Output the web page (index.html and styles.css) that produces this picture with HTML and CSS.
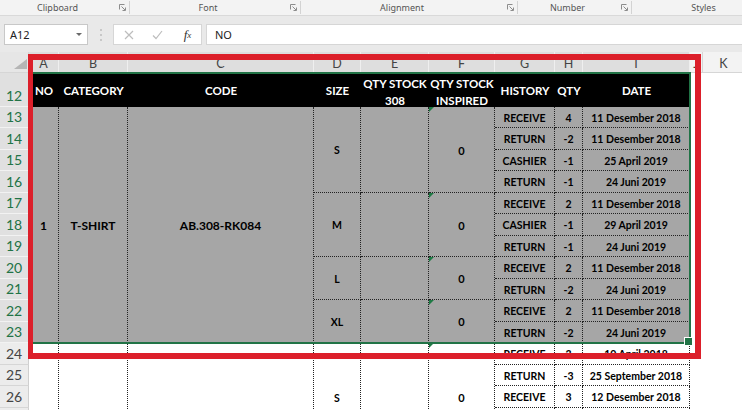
FILE: index.html
```html
<!DOCTYPE html>
<html>
<head>
<meta charset="utf-8">
<link rel="stylesheet" href="styles.css">
</head>
<body>
<div class="ribbon">
  <div class="grp g1"><span class="lbl">Clipboard</span><svg class="launch" viewBox="0 0 7 7"><path d="M.5 5.5V.5h5" /><path d="M2.5 2.5l3.6 3.6M6.5 3.5v3h-3" /></svg></div>
  <div class="grp g2"><span class="lbl">Font</span><svg class="launch" viewBox="0 0 7 7"><path d="M.5 5.5V.5h5" /><path d="M2.5 2.5l3.6 3.6M6.5 3.5v3h-3" /></svg></div>
  <div class="grp g3"><span class="lbl">Alignment</span><svg class="launch" viewBox="0 0 7 7"><path d="M.5 5.5V.5h5" /><path d="M2.5 2.5l3.6 3.6M6.5 3.5v3h-3" /></svg></div>
  <div class="grp g4"><span class="lbl">Number</span><svg class="launch" viewBox="0 0 7 7"><path d="M.5 5.5V.5h5" /><path d="M2.5 2.5l3.6 3.6M6.5 3.5v3h-3" /></svg></div>
  <div class="grp g5"><span class="lbl">Styles</span></div>
</div>

<div class="fbar">
  <div class="namebox"><span>A12</span><span class="caret"></span></div>
  <div class="grip"><svg viewBox="0 0 4 14" width="4" height="14"><circle cx="2" cy="2" r="1"/><circle cx="2" cy="7" r="1"/><circle cx="2" cy="12" r="1"/></svg></div>
  <div class="fxbox">
    <span class="fbtn"><svg viewBox="0 0 10 10" width="10" height="10"><path d="M1 1l8 8M9 1l-8 8"/></svg></span>
    <span class="fbtn"><svg viewBox="0 0 11 10" width="11" height="10"><path d="M1 5.5l3 3 6-7.5"/></svg></span>
    <span class="fbtn fx"><i>f</i><sub>x</sub></span>
  </div>
  <div class="finput">NO</div>
</div>

<div class="sheet">
  <div class="ch corner"><span class="ctri"></span></div>
  <div class="ch s">A</div><div class="ch s">B</div><div class="ch s">C</div><div class="ch s">D</div><div class="ch s">E</div><div class="ch s">F</div><div class="ch s">G</div><div class="ch s">H</div><div class="ch s">I</div><div class="ch">J</div><div class="ch">K</div>

  <div class="rh s">12</div>
  <div class="h">NO</div><div class="h">CATEGORY</div><div class="h">CODE</div><div class="h">SIZE</div><div class="h two">QTY STOCK<br>308</div><div class="h two">QTY STOCK<br>INSPIRED</div><div class="h">HISTORY</div><div class="h">QTY</div><div class="h">DATE</div>

  <div class="rh s">13</div>
  <div class="c g big r11">1</div>
  <div class="c g big r11">T-SHIRT</div>
  <div class="c g big r11">AB.308-RK084</div>
  <div class="c g r4">S</div><div class="c g r4"></div><div class="c g r4 num err">0</div>
  <div class="c g">RECEIVE</div><div class="c g">4</div><div class="c g">11 Desember 2018</div>

  <div class="rh s">14</div>
  <div class="c g">RETURN</div><div class="c g">-2</div><div class="c g">11 Desember 2018</div>

  <div class="rh s">15</div>
  <div class="c g">CASHIER</div><div class="c g">-1</div><div class="c g">25 April 2019</div>

  <div class="rh s">16</div>
  <div class="c g">RETURN</div><div class="c g">-1</div><div class="c g">24 Juni 2019</div>

  <div class="rh s">17</div>
  <div class="c g r3">M</div><div class="c g r3"></div><div class="c g r3 num err">0</div>
  <div class="c g">RECEIVE</div><div class="c g">2</div><div class="c g">11 Desember 2018</div>

  <div class="rh s">18</div>
  <div class="c g">CASHIER</div><div class="c g">-1</div><div class="c g">29 April 2019</div>

  <div class="rh s">19</div>
  <div class="c g">RETURN</div><div class="c g">-1</div><div class="c g">24 Juni 2019</div>

  <div class="rh s">20</div>
  <div class="c g r2">L</div><div class="c g r2"></div><div class="c g r2 num err">0</div>
  <div class="c g">RECEIVE</div><div class="c g">2</div><div class="c g">11 Desember 2018</div>

  <div class="rh s">21</div>
  <div class="c g">RETURN</div><div class="c g">-2</div><div class="c g">24 Juni 2019</div>

  <div class="rh s">22</div>
  <div class="c g r2">XL</div><div class="c g r2"></div><div class="c g r2 num err">0</div>
  <div class="c g">RECEIVE</div><div class="c g">2</div><div class="c g">11 Desember 2018</div>

  <div class="rh s">23</div>
  <div class="c g">RETURN</div><div class="c g">-2</div><div class="c g">24 Juni 2019</div>

  <div class="rh">24</div>
  <div class="c nb r5"></div><div class="c nb r5"></div><div class="c nb r5"></div>
  <div class="c nb r5">S</div><div class="c nb r5"></div><div class="c nb r5 num err">0</div>
  <div class="c">RECEIVE</div><div class="c">3</div><div class="c">10 April 2018</div>

  <div class="rh">25</div>
  <div class="c">RETURN</div><div class="c">-3</div><div class="c">25 September 2018</div>

  <div class="rh">26</div>
  <div class="c">RECEIVE</div><div class="c">3</div><div class="c">12 Desember 2018</div>

  <div class="rh"></div>
  <div class="c"></div><div class="c"></div><div class="c"></div>

  <div class="rh"></div>
  <div class="c"></div><div class="c"></div><div class="c"></div>

  <div class="sel"></div>
  <div class="mark"></div>
</div>
</body>
</html>
```

FILE: styles.css
```css
* { box-sizing: border-box; margin: 0; padding: 0; }
html, body { width: 742px; height: 410px; overflow: hidden; background: #fff; }
body { font-family: Lato, "Noto Sans", sans-serif; color: #000; }

/* ribbon group labels */
.ribbon {
  display: flex;
  height: 16px;
  background: #f3f3f3;
  border-bottom: 1px solid #d9d9d9;
  font-family: "Noto Sans", sans-serif;
  font-size: 9px;
  color: #555;
  overflow: hidden;
}
.grp {
  flex-shrink: 0;
  display: flex;
  align-items: center;
  height: 13px;
  margin-top: 1px;
  padding-right: 3px;
  border-right: 1px solid #d3d3d3;
}
.g1 { width: 130px; }
.g2 { width: 171px; }
.g3 { width: 217px; }
.g4 { width: 114px; }
.g5 { width: 146px; border-right: none; }
.lbl { flex: 1; text-align: center; line-height: 13px; }
.launch {
  width: 7px;
  height: 7px;
  margin-left: 4px;
  fill: none;
  stroke: #8c8c8c;
  stroke-width: 1;
}

/* formula bar */
.fbar {
  display: flex;
  height: 36px;
  padding: 8px 0 0 4px;
  background: #e9e9e9;
  font-family: "Noto Sans", sans-serif;
  font-size: 11px;
  color: #222;
}
.namebox {
  width: 84px;
  height: 21px;
  background: #fff;
  border: 1px solid #c8c8c8;
  display: flex;
  align-items: center;
  justify-content: space-between;
  padding: 0 5px;
}
.caret {
  width: 0;
  height: 0;
  border-left: 3px solid transparent;
  border-right: 3px solid transparent;
  border-top: 3px solid #6a6a6a;
}
.grip {
  width: 25px;
  height: 21px;
  display: flex;
  align-items: center;
  justify-content: center;
}
.grip svg { fill: #bcbcbc; }
.fxbox {
  width: 89px;
  height: 21px;
  background: #fff;
  border: 1px solid #d6d6d6;
  display: flex;
  align-items: center;
}
.fbtn {
  width: 29px;
  display: flex;
  align-items: center;
  justify-content: center;
}
.fbtn svg { fill: none; stroke: #bdbdbd; stroke-width: 1.2; }
.fx {
  font-family: "Liberation Serif", serif;
  font-size: 13px;
  color: #333;
  padding-left: 2px;
}
.fx sub { font-size: 9px; font-style: italic; vertical-align: -1px; }
.finput {
  flex: 1;
  margin-left: 4px;
  height: 21px;
  background: #fff;
  border: 1px solid #d6d6d6;
  border-right: none;
  padding-left: 8px;
  display: flex;
  align-items: center;
}

/* sheet */
.sheet {
  position: relative;
  display: grid;
  grid-template-columns: 29px 30px 69px 186px 47px 68px 66px 60px 28px 107px 13px 42px;
  grid-template-rows: 21px 34px repeat(8, 21px 22px);
}
.ch {
  display: flex;
  align-items: center;
  justify-content: center;
  padding-top: 3px;
  background: #f3f3f3;
  border-right: 1px solid #d6d6d6;
  border-bottom: 1px solid #d6d6d6;
  font-size: 12.5px;
  color: #444;
}
.ch.s { background: #dedede; border-right-color: #efefef; }
.corner {
  background: #e6e6e6;
  align-items: flex-end;
  justify-content: flex-end;
  padding: 0 1px 3px 0;
}
.ctri {
  width: 0;
  height: 0;
  border-left: 13px solid transparent;
  border-bottom: 10px solid #b5b5b5;
}
.rh {
  grid-column: 1;
  display: flex;
  align-items: flex-end;
  justify-content: center;
  padding-bottom: 2px;
  font-size: 14px;
  line-height: 16px;
  background: #ececec;
  color: #444;
  border-bottom: 1px solid #d6d6d6;
  border-right: 1px solid #cfcfcf;
}
.rh.s { background: #e0e0e0; color: #217346; border-bottom-color: #f2f2f2; }

.h {
  background: #000;
  color: #fff;
  font-weight: 700;
  font-size: 11.5px;
  line-height: 16px;
  display: flex;
  align-items: center;
  justify-content: center;
  text-align: center;
  white-space: nowrap;
  padding-top: 2px;
}
.h.two { padding-top: 4px; line-height: 17px; }

.c {
  display: flex;
  align-items: center;
  justify-content: center;
  text-align: center;
  white-space: nowrap;
  font-weight: 700;
  font-size: 10.5px;
  padding-top: 1px;
  border-right: 1px dotted #222;
  border-bottom: 1px dotted #222;
}
.g { background: #a6a6a6; }
.big { font-size: 12px; }
.num { font-size: 11px; }
.nb { border-bottom: none; }
.r2 { grid-row: span 2; }
.r3 { grid-row: span 3; }
.r4 { grid-row: span 4; }
.r5 { grid-row: span 5; }
.r11 { grid-row: span 11; }

.err { position: relative; }
.err::before {
  content: "";
  position: absolute;
  left: 0;
  top: 0;
  border-top: 5px solid #1f7a45;
  border-right: 5px solid transparent;
}

/* selection outline over A12:I23 */
.sel {
  position: absolute;
  grid-row: 2 / 14;
  grid-column: 2 / 11;
  top: -1px;
  left: -1px;
  right: -1px;
  bottom: -1px;
  border: 2px solid #217346;
  pointer-events: none;
}
.sel::after {
  content: "";
  position: absolute;
  right: -4px;
  bottom: -4px;
  width: 7px;
  height: 7px;
  background: #217346;
  border: 1px solid #fff;
}

/* red annotation rectangle */
.mark {
  position: absolute;
  left: 28px;
  top: 2px;
  width: 673px;
  height: 305px;
  border: 6px solid #dc1f2a;
  border-left-width: 5px;
  pointer-events: none;
}
```
